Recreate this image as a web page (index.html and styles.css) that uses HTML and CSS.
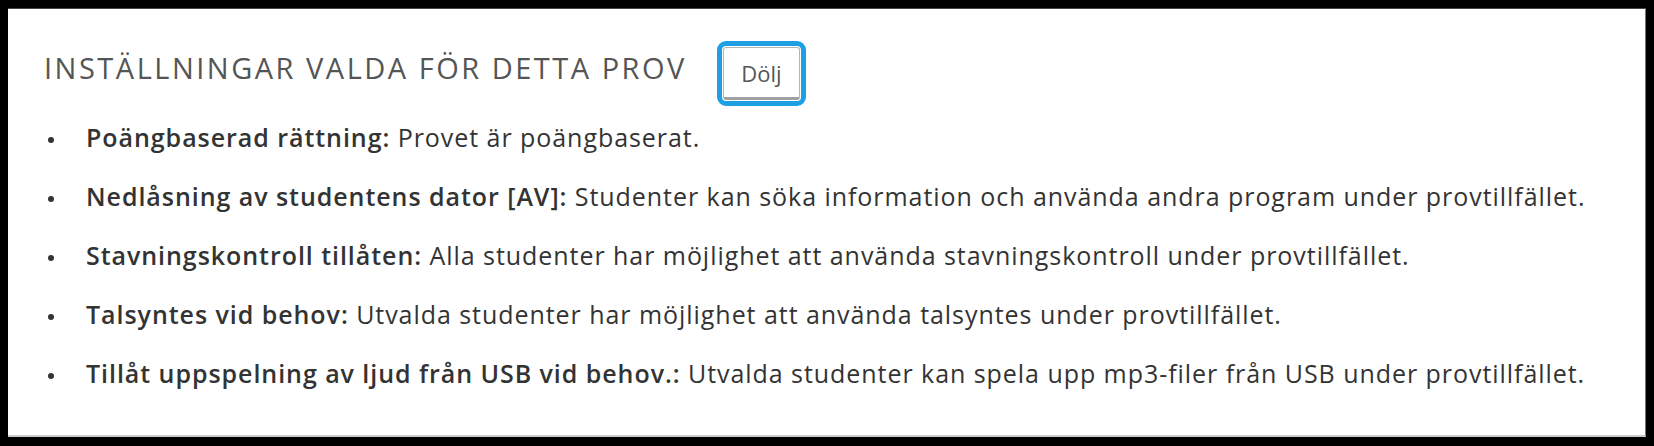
FILE: index.html
```html
<!DOCTYPE html>
<html lang="sv">
<head>
    <meta charset="UTF-8">
    <meta name="viewport" content="width=device-width, initial-scale=1.0">
    <title>Inställningar</title>
    <link rel="stylesheet" href="styles.css">
</head>
<body>

<div class="settings-panel">
    <div class="settings-header">
        <h2>INSTÄLLNINGAR VALDA FÖR DETTA PROV</h2>
        <span class="focus-ring"><button class="toggle-button">Dölj</button></span>
    </div>

    <ul class="settings-list">
        <li><strong>Poängbaserad rättning:</strong> Provet är poängbaserat.</li>
        <li><strong>Nedlåsning av studentens dator [AV]:</strong> Studenter kan söka information och använda andra program under provtillfället.</li>
        <li><strong>Stavningskontroll tillåten:</strong> Alla studenter har möjlighet att använda stavningskontroll under provtillfället.</li>
        <li><strong>Talsyntes vid behov:</strong> Utvalda studenter har möjlighet att använda talsyntes under provtillfället.</li>
        <li><strong>Tillåt uppspelning av ljud från USB vid behov.:</strong> Utvalda studenter kan spela upp mp3-filer från USB under provtillfället.</li>
    </ul>
</div>

</body>
</html>
```

FILE: styles.css
```css
html, body {
    height: 100%;
}
body {
    margin: 0;
    padding: 8px 8px 9px 8px;
    box-sizing: border-box;
    background-color: #000;
    font-family: "Open Sans", Lato, sans-serif;
    color: #333;
}
.settings-panel {
    height: 100%;
    box-sizing: border-box;
    background: #fff;
    border-top: 1px solid #444;
    border-right: 1px solid #777;
    border-bottom: 2px solid #ccc;
    padding: 32px 36px 0 36px;
}
.settings-header {
    display: flex;
    align-items: flex-start;
    height: 63px;
}
.settings-header h2 {
    margin: 10px 0 0 0;
    font-size: 29px;
    font-weight: normal;
    letter-spacing: 2.5px;
    line-height: 1.2;
    color: #555;
}
.focus-ring {
    margin-left: 30px;
    padding: 1px;
    border: 5px solid #1e9fe4;
    border-radius: 9px;
    display: flex;
}
.toggle-button {
    width: 77px;
    height: 53px;
    background: #fff;
    border: 1px solid #b5b5b5;
    border-bottom: 3px solid #a0a0a0;
    border-radius: 3px;
    font-family: "Open Sans", Lato, sans-serif;
    font-size: 22px;
    color: #555;
    padding: 0;
    cursor: pointer;
}
.settings-list {
    list-style: none;
    margin: 4px 0 0 0;
    padding: 0;
}
.settings-list li {
    font-size: 25px;
    letter-spacing: 0.95px;
    line-height: 59px;
    white-space: nowrap;
}
.settings-list li strong {
    font-weight: 600;
}
.settings-list li::before {
    content: "";
    display: inline-block;
    width: 6px;
    height: 6px;
    border-radius: 50%;
    background: #333;
    margin: 0 32px 0 4px;
    vertical-align: middle;
}
```
